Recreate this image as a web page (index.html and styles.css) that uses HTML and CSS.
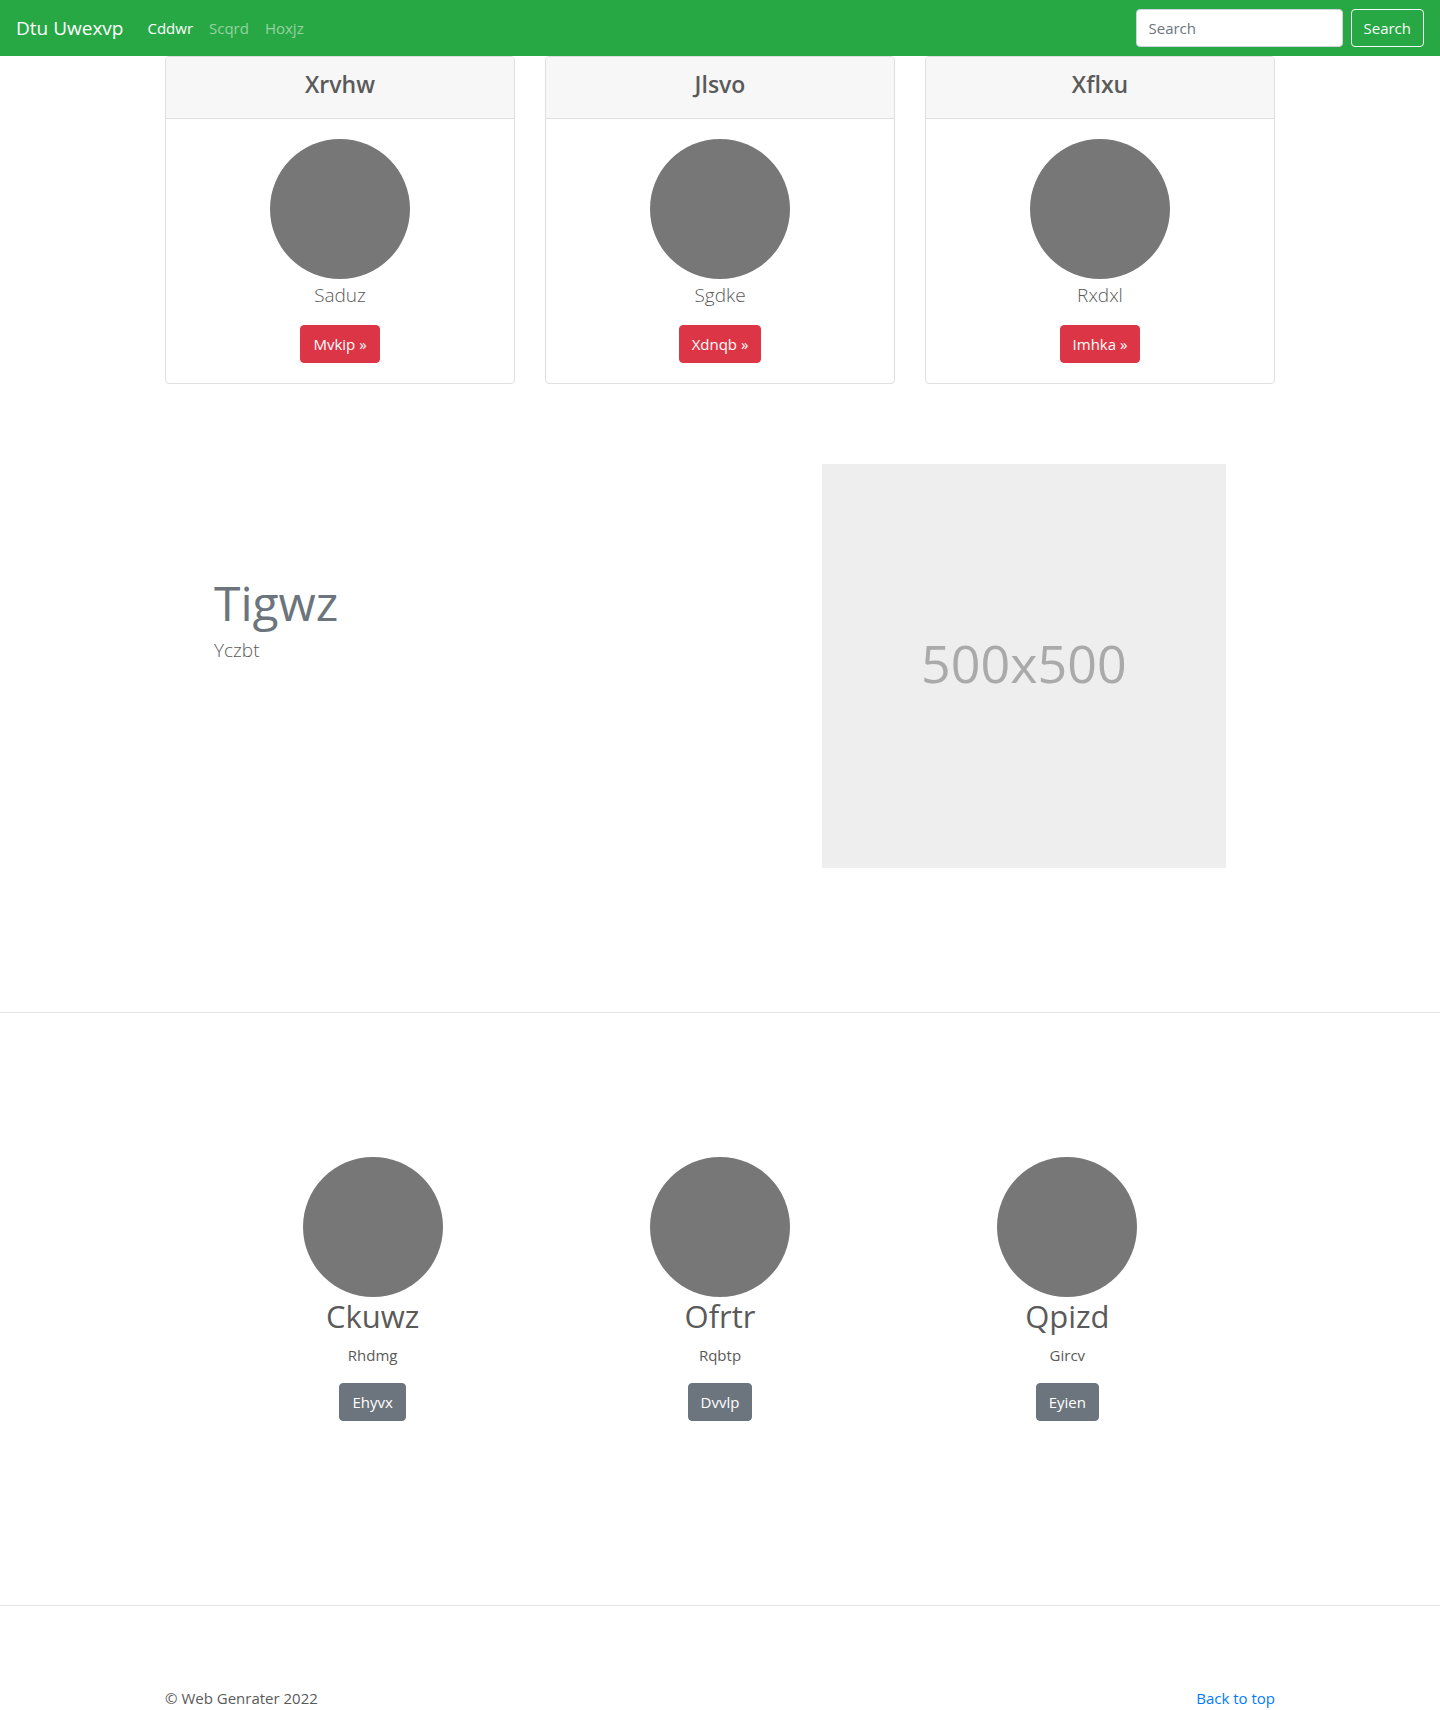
FILE: index.html
```html
<!DOCTYPE html>
<html lang="en">
<head>
  <meta charset="utf-8">
  <meta name="viewport" content="width=device-width, initial-scale=1">
  <title>Dtu Uwexvp</title>
  <link rel="stylesheet" href="styles.css">
</head>
<body>
  <header class="navbar" id="top">
    <a class="navbar-brand" href="#">Dtu Uwexvp</a>
    <nav class="navbar-nav">
      <a class="nav-link active" href="#">Cddwr</a>
      <a class="nav-link" href="#">Scqrd</a>
      <a class="nav-link" href="#">Hoxjz</a>
    </nav>
    <form class="search-form">
      <input class="search-input" type="text" placeholder="Search" aria-label="Search">
      <button class="btn btn-outline" type="submit">Search</button>
    </form>
  </header>

  <main>
    <section class="container card-deck">
      <article class="card">
        <div class="card-header"><h4 class="card-title">Xrvhw</h4></div>
        <div class="card-body">
          <svg class="circle" viewBox="0 0 140 140" aria-hidden="true"><circle cx="70" cy="70" r="70"/></svg>
          <p class="lead">Saduz</p>
          <button class="btn btn-danger" type="button">Mvkip »</button>
        </div>
      </article>
      <article class="card">
        <div class="card-header"><h4 class="card-title">Jlsvo</h4></div>
        <div class="card-body">
          <svg class="circle" viewBox="0 0 140 140" aria-hidden="true"><circle cx="70" cy="70" r="70"/></svg>
          <p class="lead">Sgdke</p>
          <button class="btn btn-danger" type="button">Xdnqb »</button>
        </div>
      </article>
      <article class="card">
        <div class="card-header"><h4 class="card-title">Xflxu</h4></div>
        <div class="card-body">
          <svg class="circle" viewBox="0 0 140 140" aria-hidden="true"><circle cx="70" cy="70" r="70"/></svg>
          <p class="lead">Rxdxl</p>
          <button class="btn btn-danger" type="button">Imhka »</button>
        </div>
      </article>
    </section>

    <section class="container featurette">
      <div class="featurette-text">
        <h2 class="featurette-heading">Tigwz</h2>
        <p class="lead">Yczbt</p>
      </div>
      <div class="featurette-media">
        <div class="placeholder">500x500</div>
      </div>
    </section>

    <hr class="divider">

    <section class="container columns">
      <div class="column">
        <svg class="circle" viewBox="0 0 140 140" aria-hidden="true"><circle cx="70" cy="70" r="70"/></svg>
        <h2 class="column-title">Ckuwz</h2>
        <p class="column-text">Rhdmg</p>
        <button class="btn btn-secondary" type="button">Ehyvx</button>
      </div>
      <div class="column">
        <svg class="circle" viewBox="0 0 140 140" aria-hidden="true"><circle cx="70" cy="70" r="70"/></svg>
        <h2 class="column-title">Ofrtr</h2>
        <p class="column-text">Rqbtp</p>
        <button class="btn btn-secondary" type="button">Dvvlp</button>
      </div>
      <div class="column">
        <svg class="circle" viewBox="0 0 140 140" aria-hidden="true"><circle cx="70" cy="70" r="70"/></svg>
        <h2 class="column-title">Qpizd</h2>
        <p class="column-text">Gircv</p>
        <button class="btn btn-secondary" type="button">Eyien</button>
      </div>
    </section>

    <hr class="divider">
  </main>

  <footer class="container footer">
    <span>© Web Genrater 2022</span>
    <a class="footer-link" href="#top">Back to top</a>
  </footer>
</body>
</html>
```
FILE: styles.css
```css
*,
*::before,
*::after {
  box-sizing: border-box;
}

body {
  margin: 0;
  background: #fff;
  color: #5a5a5a;
  font-family: "Open Sans", "Noto Sans", sans-serif;
  font-size: 15px;
  line-height: 24px;
}

h2,
h4,
p {
  margin: 0;
}

a {
  text-decoration: none;
}

/* Navigation bar */

.navbar {
  display: flex;
  align-items: center;
  padding: 8px 16px;
  background: #28a745;
}

.navbar-brand {
  margin-right: 16px;
  color: #fff;
  font-size: 19px;
  line-height: 30px;
}

.navbar-nav {
  display: flex;
}

.nav-link {
  padding: 8px;
  color: rgba(255, 255, 255, 0.5);
}

.nav-link.active {
  color: #fff;
}

.search-form {
  display: flex;
  gap: 8px;
  margin-left: auto;
}

.search-input {
  width: 207px;
  height: 38px;
  padding: 6px 12px;
  border: 1px solid #ced4da;
  border-radius: 4px;
  background: #fff;
  color: #495057;
  font: inherit;
}

.search-input::placeholder {
  color: #6c757d;
  opacity: 1;
}

/* Buttons */

.btn {
  padding: 6px 12px;
  border: 1px solid transparent;
  border-radius: 4px;
  color: #fff;
  font: inherit;
  cursor: pointer;
}

.btn-outline {
  border-color: #f8f9fa;
  background: transparent;
  color: #f8f9fa;
}

.btn-danger {
  border-color: #dc3545;
  background: #dc3545;
}

.btn-secondary {
  border-color: #6c757d;
  background: #6c757d;
}

/* Shared pieces */

.container {
  width: 100%;
  max-width: 1140px;
  margin: 0 auto;
  padding: 0 15px;
}

.circle {
  display: block;
  width: 140px;
  height: 140px;
  fill: #777;
}

.lead {
  font-size: 19px;
  font-weight: 300;
  line-height: 32px;
}

.divider {
  height: 1px;
  margin: 0;
  border: 0;
  background: #e5e5e5;
}

/* Cards */

.card-deck {
  display: grid;
  grid-template-columns: repeat(3, 1fr);
  gap: 30px;
}

.card {
  overflow: hidden;
  border: 1px solid #dfdfdf;
  border-radius: 4px;
  text-align: center;
}

.card-header {
  padding: 13px 20px 19px;
  border-bottom: 1px solid #dfdfdf;
  background: #f7f7f7;
}

.card-title {
  font-size: 23px;
  font-weight: 600;
  line-height: 29px;
}

.card-body {
  display: flex;
  flex-direction: column;
  align-items: center;
  padding: 20px;
}

.card-body .lead {
  margin-bottom: 14px;
}

/* Featurette */

.featurette {
  display: grid;
  grid-template-columns: 7fr 5fr;
  padding: 80px 49px 144px;
}

.featurette-text {
  padding: 114px 15px 0;
}

.featurette-heading {
  margin-bottom: 6px;
  color: #6c757d;
  font-size: 48px;
  font-weight: 400;
  line-height: 50px;
}

.featurette-media {
  padding: 0 15px;
}

.placeholder {
  display: flex;
  align-items: center;
  justify-content: center;
  aspect-ratio: 1;
  padding-bottom: 6px;
  background: #eee;
  color: #aaa;
  font-size: 52px;
}

/* Columns */

.columns {
  display: grid;
  grid-template-columns: repeat(3, 1fr);
  padding: 144px 49px 184px;
}

.column {
  display: flex;
  flex-direction: column;
  align-items: center;
}

.column-title {
  margin-bottom: 8px;
  font-size: 31px;
  font-weight: 400;
  line-height: 38px;
}

.column-text {
  margin-bottom: 16px;
}

/* Footer */

.footer {
  display: flex;
  justify-content: space-between;
  padding-top: 80px;
}

.footer-link {
  color: #007bff;
}
```
